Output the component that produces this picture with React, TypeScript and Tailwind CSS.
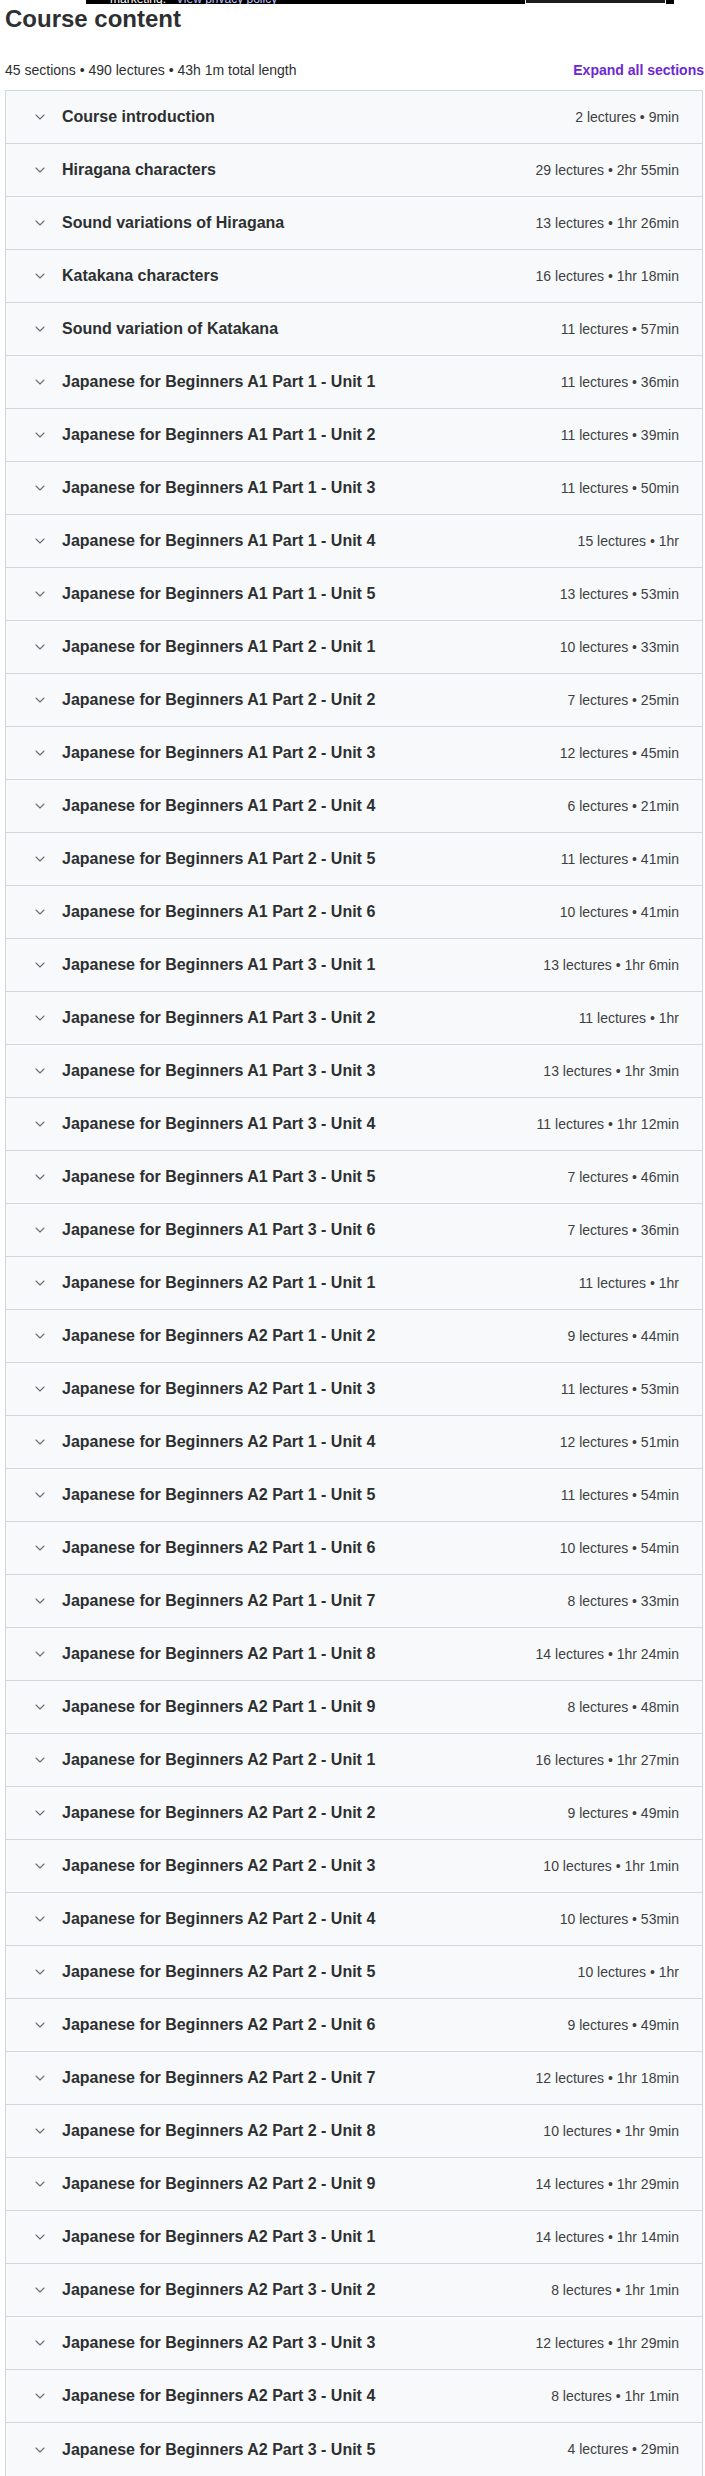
import { ChevronDown } from 'lucide-react';

type Section = { title: string; lectures: number; length: string };

const sections: Section[] = [
    { title: 'Course introduction', lectures: 2, length: '9min' },
    { title: 'Hiragana characters', lectures: 29, length: '2hr 55min' },
    { title: 'Sound variations of Hiragana', lectures: 13, length: '1hr 26min' },
    { title: 'Katakana characters', lectures: 16, length: '1hr 18min' },
    { title: 'Sound variation of Katakana', lectures: 11, length: '57min' },
    { title: 'Japanese for Beginners A1 Part 1 - Unit 1', lectures: 11, length: '36min' },
    { title: 'Japanese for Beginners A1 Part 1 - Unit 2', lectures: 11, length: '39min' },
    { title: 'Japanese for Beginners A1 Part 1 - Unit 3', lectures: 11, length: '50min' },
    { title: 'Japanese for Beginners A1 Part 1 - Unit 4', lectures: 15, length: '1hr' },
    { title: 'Japanese for Beginners A1 Part 1 - Unit 5', lectures: 13, length: '53min' },
    { title: 'Japanese for Beginners A1 Part 2 - Unit 1', lectures: 10, length: '33min' },
    { title: 'Japanese for Beginners A1 Part 2 - Unit 2', lectures: 7, length: '25min' },
    { title: 'Japanese for Beginners A1 Part 2 - Unit 3', lectures: 12, length: '45min' },
    { title: 'Japanese for Beginners A1 Part 2 - Unit 4', lectures: 6, length: '21min' },
    { title: 'Japanese for Beginners A1 Part 2 - Unit 5', lectures: 11, length: '41min' },
    { title: 'Japanese for Beginners A1 Part 2 - Unit 6', lectures: 10, length: '41min' },
    { title: 'Japanese for Beginners A1 Part 3 - Unit 1', lectures: 13, length: '1hr 6min' },
    { title: 'Japanese for Beginners A1 Part 3 - Unit 2', lectures: 11, length: '1hr' },
    { title: 'Japanese for Beginners A1 Part 3 - Unit 3', lectures: 13, length: '1hr 3min' },
    { title: 'Japanese for Beginners A1 Part 3 - Unit 4', lectures: 11, length: '1hr 12min' },
    { title: 'Japanese for Beginners A1 Part 3 - Unit 5', lectures: 7, length: '46min' },
    { title: 'Japanese for Beginners A1 Part 3 - Unit 6', lectures: 7, length: '36min' },
    { title: 'Japanese for Beginners A2 Part 1 - Unit 1', lectures: 11, length: '1hr' },
    { title: 'Japanese for Beginners A2 Part 1 - Unit 2', lectures: 9, length: '44min' },
    { title: 'Japanese for Beginners A2 Part 1 - Unit 3', lectures: 11, length: '53min' },
    { title: 'Japanese for Beginners A2 Part 1 - Unit 4', lectures: 12, length: '51min' },
    { title: 'Japanese for Beginners A2 Part 1 - Unit 5', lectures: 11, length: '54min' },
    { title: 'Japanese for Beginners A2 Part 1 - Unit 6', lectures: 10, length: '54min' },
    { title: 'Japanese for Beginners A2 Part 1 - Unit 7', lectures: 8, length: '33min' },
    { title: 'Japanese for Beginners A2 Part 1 - Unit 8', lectures: 14, length: '1hr 24min' },
    { title: 'Japanese for Beginners A2 Part 1 - Unit 9', lectures: 8, length: '48min' },
    { title: 'Japanese for Beginners A2 Part 2 - Unit 1', lectures: 16, length: '1hr 27min' },
    { title: 'Japanese for Beginners A2 Part 2 - Unit 2', lectures: 9, length: '49min' },
    { title: 'Japanese for Beginners A2 Part 2 - Unit 3', lectures: 10, length: '1hr 1min' },
    { title: 'Japanese for Beginners A2 Part 2 - Unit 4', lectures: 10, length: '53min' },
    { title: 'Japanese for Beginners A2 Part 2 - Unit 5', lectures: 10, length: '1hr' },
    { title: 'Japanese for Beginners A2 Part 2 - Unit 6', lectures: 9, length: '49min' },
    { title: 'Japanese for Beginners A2 Part 2 - Unit 7', lectures: 12, length: '1hr 18min' },
    { title: 'Japanese for Beginners A2 Part 2 - Unit 8', lectures: 10, length: '1hr 9min' },
    { title: 'Japanese for Beginners A2 Part 2 - Unit 9', lectures: 14, length: '1hr 29min' },
    { title: 'Japanese for Beginners A2 Part 3 - Unit 1', lectures: 14, length: '1hr 14min' },
    { title: 'Japanese for Beginners A2 Part 3 - Unit 2', lectures: 8, length: '1hr 1min' },
    { title: 'Japanese for Beginners A2 Part 3 - Unit 3', lectures: 12, length: '1hr 29min' },
    { title: 'Japanese for Beginners A2 Part 3 - Unit 4', lectures: 8, length: '1hr 1min' },
    { title: 'Japanese for Beginners A2 Part 3 - Unit 5', lectures: 4, length: '29min' },
];

// bottom edge of the cookie banner that sits over the page
function CookieBannerEdge() {
    return (
        <div className="absolute top-0 left-[86px] w-[588px] h-[4px] bg-black overflow-hidden">
            <div className="absolute left-[24px] top-[-3px] flex gap-[10px] text-[12px] leading-[4px] whitespace-nowrap">
                <span className="text-white">marketing.</span>
                <span className="text-[#c0c4fc]">View privacy policy</span>
            </div>
            <div className="absolute left-[439px] bottom-0 w-[141px] h-[10px] border border-white bg-[#1c1d1f]" />
        </div>
    );
}

export default function App() {
    return (
        <div
            className="relative w-[705px] h-[2476px] overflow-hidden bg-white text-[#2d2f31]"
            style={{ fontFamily: '"Liberation Sans", Arial, sans-serif' }}
        >
            <CookieBannerEdge />
            <div className="pl-[5px] pt-[4px]">
                <h2 className="text-[24px] leading-[30px] font-bold">Course content</h2>

                <div className="mt-[26px] mb-[10px] flex items-center justify-between text-[14px] leading-[20px]">
                    <span>45 sections • 490 lectures • 43h 1m total length</span>
                    <button className="font-bold text-[#6d28d2] pr-[1px]">Expand all sections</button>
                </div>

                <div className="w-[698px] border border-[#d1d7dc] divide-y divide-[#d1d7dc]">
                    {sections.map((s) => (
                        <div
                            key={s.title}
                            className="h-[53px] bg-[#f7f9fa] flex items-center pl-[26px] pr-[23px]"
                        >
                            <ChevronDown size={16} strokeWidth={1.6} className="text-[#6a6f73] shrink-0" />
                            <span className="ml-[14px] text-[16px] font-bold text-[#2d2f31]">{s.title}</span>
                            <span className="ml-auto text-[14px] text-[#3e4143]">
                                {s.lectures} lectures • {s.length}
                            </span>
                        </div>
                    ))}
                </div>
            </div>
        </div>
    );
}
